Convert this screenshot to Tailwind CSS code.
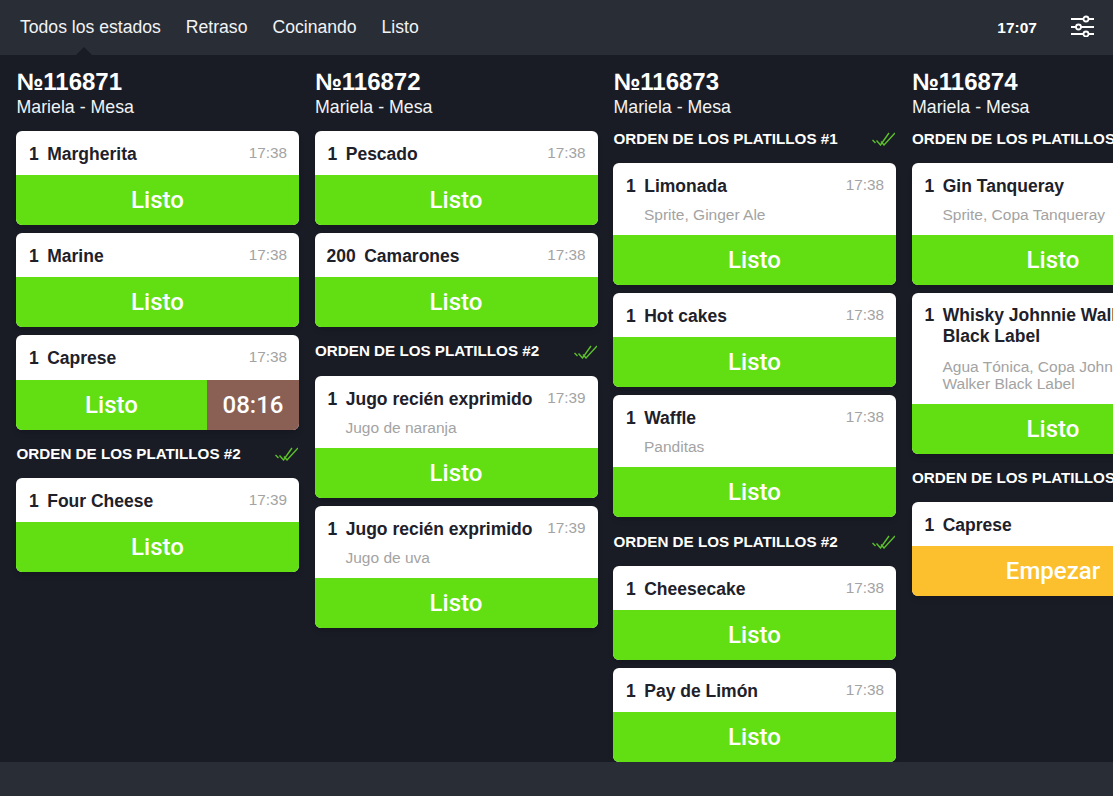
<!DOCTYPE html>
<html lang="es">
<head>
<meta charset="utf-8">
<script src="https://cdn.jsdelivr.net/npm/@tailwindcss/browser@4"></script>
<title>Órdenes</title>
</head>
<body class="bg-[#191c25] overflow-hidden font-['Liberation_Sans',Arial,sans-serif]">
<div class="w-[1113px] h-[796px] flex flex-col overflow-hidden">
  <header class="relative h-[55px] shrink-0 bg-[#292d36] flex items-center pl-[20px] pr-[19px] text-white">
    <nav class="flex gap-[25px] text-[17.6px] text-[#f2f3f4]">
      <span>Todos los estados</span><span>Retraso</span><span>Cocinando</span><span>Listo</span>
    </nav>
    <div class="ml-auto flex items-center gap-[34px]">
      <span class="text-[15.5px] font-bold">17:07</span>
      <svg class="w-[23px] h-[22px] mb-[4px]" viewBox="0 0 23 22" fill="none" stroke="white" stroke-width="1.8"><path d="M0 4h12.5M17.5 4H23M0 12h5M10 12h13M0 19h12.5M17.5 19H23"/><circle cx="15" cy="4" r="2.5"/><circle cx="7.5" cy="12" r="2.5"/><circle cx="15" cy="19" r="2.5"/></svg>
    </div>
    <div class="absolute left-[76px] bottom-0 w-0 h-0 border-x-[8px] border-x-transparent border-b-[8px] border-b-[#191c25]"></div>
  </header>

  <main class="flex-1 min-h-0 flex gap-[15.5px] pl-[16px] overflow-hidden">

    <!-- 116871 -->
    <section class="w-[283px] shrink-0 text-white">
      <div class="h-[59px] pt-[13px] pl-[0.5px]"><h2 class="text-[24px] leading-[28px] font-bold">№116871</h2><p class="text-[17.75px] leading-[23px] text-[#f2f3f4]">Mariela - Mesa</p></div>
      <div class="pt-[17px] flex flex-col gap-2">
        <article class="rounded-[6px] overflow-hidden bg-white shadow-md"><div class="flex justify-between pt-[13px] pl-[13px] pr-[12px] h-[44px]"><div class="flex gap-[8.5px] text-[17.5px] leading-[21px] font-bold text-[#1e212a]"><span>1</span><span>Margherita</span></div><span class="text-[15.3px] leading-[18px] text-[#a3a3a3]">17:38</span></div><div class="h-[50px] bg-[#62df13] flex items-center justify-center text-[24px] font-medium font-['Roboto',sans-serif]">Listo</div></article>
        <article class="rounded-[6px] overflow-hidden bg-white shadow-md"><div class="flex justify-between pt-[13px] pl-[13px] pr-[12px] h-[44px]"><div class="flex gap-[8.5px] text-[17.5px] leading-[21px] font-bold text-[#1e212a]"><span>1</span><span>Marine</span></div><span class="text-[15.3px] leading-[18px] text-[#a3a3a3]">17:38</span></div><div class="h-[50px] bg-[#62df13] flex items-center justify-center text-[24px] font-medium font-['Roboto',sans-serif]">Listo</div></article>
        <article class="rounded-[6px] overflow-hidden bg-white shadow-md"><div class="flex justify-between pt-[13px] pl-[13px] pr-[12px] h-[45px]"><div class="flex gap-[8.5px] text-[17.5px] leading-[21px] font-bold text-[#1e212a]"><span>1</span><span>Caprese</span></div><span class="text-[15.3px] leading-[18px] text-[#a3a3a3]">17:38</span></div><div class="h-[50px] flex text-[24px] font-medium font-['Roboto',sans-serif]"><div class="flex-1 bg-[#62df13] flex items-center justify-center">Listo</div><div class="w-[92px] bg-[#8a6054] flex items-center justify-center">08:16</div></div></article>
      </div>
      <div class="h-[48px] flex items-center justify-between pl-[0.5px] pr-[1px]"><h3 class="text-[15.2px] font-bold">ORDEN DE LOS PLATILLOS #2</h3><svg class="w-[23px] h-[14px]" viewBox="0 0 23 14" fill="none" stroke="#5cc02a" stroke-width="1.4"><path d="M0.5 8l3 3M4.5 8.5l4 4.5L17 1M9 9.5l3 3.5L23 1"/></svg></div>
      <div class="flex flex-col gap-2">
        <article class="rounded-[6px] overflow-hidden bg-white shadow-md"><div class="flex justify-between pt-[13px] pl-[13px] pr-[12px] h-[44px]"><div class="flex gap-[8.5px] text-[17.5px] leading-[21px] font-bold text-[#1e212a]"><span>1</span><span>Four Cheese</span></div><span class="text-[15.3px] leading-[18px] text-[#a3a3a3]">17:39</span></div><div class="h-[50px] bg-[#62df13] flex items-center justify-center text-[24px] font-medium font-['Roboto',sans-serif]">Listo</div></article>
      </div>
    </section>

    <!-- 116872 -->
    <section class="w-[283px] shrink-0 text-white">
      <div class="h-[59px] pt-[13px] pl-[0.5px]"><h2 class="text-[24px] leading-[28px] font-bold">№116872</h2><p class="text-[17.75px] leading-[23px] text-[#f2f3f4]">Mariela - Mesa</p></div>
      <div class="pt-[17px] flex flex-col gap-2">
        <article class="rounded-[6px] overflow-hidden bg-white shadow-md"><div class="flex justify-between pt-[13px] pl-[13px] pr-[12px] h-[44px]"><div class="flex gap-[8.5px] text-[17.5px] leading-[21px] font-bold text-[#1e212a]"><span>1</span><span>Pescado</span></div><span class="text-[15.3px] leading-[18px] text-[#a3a3a3]">17:38</span></div><div class="h-[50px] bg-[#62df13] flex items-center justify-center text-[24px] font-medium font-['Roboto',sans-serif]">Listo</div></article>
        <article class="rounded-[6px] overflow-hidden bg-white shadow-md"><div class="flex justify-between pt-[13px] pl-[12px] pr-[12px] h-[44px]"><div class="flex gap-[8.5px] text-[17.5px] leading-[21px] font-bold text-[#1e212a]"><span>200</span><span>Camarones</span></div><span class="text-[15.3px] leading-[18px] text-[#a3a3a3]">17:38</span></div><div class="h-[50px] bg-[#62df13] flex items-center justify-center text-[24px] font-medium font-['Roboto',sans-serif]">Listo</div></article>
      </div>
      <div class="h-[49px] flex items-center justify-between pl-[0.5px] pr-[1px]"><h3 class="text-[15.2px] font-bold">ORDEN DE LOS PLATILLOS #2</h3><svg class="w-[23px] h-[14px]" viewBox="0 0 23 14" fill="none" stroke="#5cc02a" stroke-width="1.4"><path d="M0.5 8l3 3M4.5 8.5l4 4.5L17 1M9 9.5l3 3.5L23 1"/></svg></div>
      <div class="flex flex-col gap-2">
        <article class="rounded-[6px] overflow-hidden bg-white shadow-md"><div class="flex justify-between pt-[13px] pl-[13px] pr-[12px] h-[72px]"><div><div class="flex gap-[8.5px] text-[17.5px] leading-[21px] font-bold text-[#1e212a]"><span>1</span><span>Jugo recién exprimido</span></div><p class="mt-[9px] ml-[18px] text-[15.5px] leading-[17px] text-[#a3a3a3]">Jugo de naranja</p></div><span class="text-[15.3px] leading-[18px] text-[#a3a3a3]">17:39</span></div><div class="h-[50px] bg-[#62df13] flex items-center justify-center text-[24px] font-medium font-['Roboto',sans-serif]">Listo</div></article>
        <article class="rounded-[6px] overflow-hidden bg-white shadow-md"><div class="flex justify-between pt-[13px] pl-[13px] pr-[12px] h-[72px]"><div><div class="flex gap-[8.5px] text-[17.5px] leading-[21px] font-bold text-[#1e212a]"><span>1</span><span>Jugo recién exprimido</span></div><p class="mt-[9px] ml-[18px] text-[15.5px] leading-[17px] text-[#a3a3a3]">Jugo de uva</p></div><span class="text-[15.3px] leading-[18px] text-[#a3a3a3]">17:39</span></div><div class="h-[50px] bg-[#62df13] flex items-center justify-center text-[24px] font-medium font-['Roboto',sans-serif]">Listo</div></article>
      </div>
    </section>

    <!-- 116873 -->
    <section class="w-[283px] shrink-0 text-white">
      <div class="h-[59px] pt-[13px] pl-[0.5px]"><h2 class="text-[24px] leading-[28px] font-bold">№116873</h2><p class="text-[17.75px] leading-[23px] text-[#f2f3f4]">Mariela - Mesa</p></div>
      <div class="h-[49px] flex items-center justify-between pl-[0.5px] pr-[1px]"><h3 class="mt-[1px] text-[15.2px] font-bold">ORDEN DE LOS PLATILLOS #1</h3><svg class="w-[23px] h-[14px]" viewBox="0 0 23 14" fill="none" stroke="#5cc02a" stroke-width="1.4"><path d="M0.5 8l3 3M4.5 8.5l4 4.5L17 1M9 9.5l3 3.5L23 1"/></svg></div>
      <div class="flex flex-col gap-2">
        <article class="rounded-[6px] overflow-hidden bg-white shadow-md"><div class="flex justify-between pt-[13px] pl-[13px] pr-[12px] h-[72px]"><div><div class="flex gap-[8.5px] text-[17.5px] leading-[21px] font-bold text-[#1e212a]"><span>1</span><span>Limonada</span></div><p class="mt-[9px] ml-[18px] text-[15.5px] leading-[17px] text-[#a3a3a3]">Sprite, Ginger Ale</p></div><span class="text-[15.3px] leading-[18px] text-[#a3a3a3]">17:38</span></div><div class="h-[50px] bg-[#62df13] flex items-center justify-center text-[24px] font-medium font-['Roboto',sans-serif]">Listo</div></article>
        <article class="rounded-[6px] overflow-hidden bg-white shadow-md"><div class="flex justify-between pt-[13px] pl-[13px] pr-[12px] h-[44px]"><div class="flex gap-[8.5px] text-[17.5px] leading-[21px] font-bold text-[#1e212a]"><span>1</span><span>Hot cakes</span></div><span class="text-[15.3px] leading-[18px] text-[#a3a3a3]">17:38</span></div><div class="h-[50px] bg-[#62df13] flex items-center justify-center text-[24px] font-medium font-['Roboto',sans-serif]">Listo</div></article>
        <article class="rounded-[6px] overflow-hidden bg-white shadow-md"><div class="flex justify-between pt-[13px] pl-[13px] pr-[12px] h-[72px]"><div><div class="flex gap-[8.5px] text-[17.5px] leading-[21px] font-bold text-[#1e212a]"><span>1</span><span>Waffle</span></div><p class="mt-[9px] ml-[18px] text-[15.5px] leading-[17px] text-[#a3a3a3]">Panditas</p></div><span class="text-[15.3px] leading-[18px] text-[#a3a3a3]">17:38</span></div><div class="h-[50px] bg-[#62df13] flex items-center justify-center text-[24px] font-medium font-['Roboto',sans-serif]">Listo</div></article>
      </div>
      <div class="h-[49px] flex items-center justify-between pl-[0.5px] pr-[1px]"><h3 class="mt-[1px] text-[15.2px] font-bold">ORDEN DE LOS PLATILLOS #2</h3><svg class="w-[23px] h-[14px]" viewBox="0 0 23 14" fill="none" stroke="#5cc02a" stroke-width="1.4"><path d="M0.5 8l3 3M4.5 8.5l4 4.5L17 1M9 9.5l3 3.5L23 1"/></svg></div>
      <div class="flex flex-col gap-2">
        <article class="rounded-[6px] overflow-hidden bg-white shadow-md"><div class="flex justify-between pt-[13px] pl-[13px] pr-[12px] h-[44px]"><div class="flex gap-[8.5px] text-[17.5px] leading-[21px] font-bold text-[#1e212a]"><span>1</span><span>Cheesecake</span></div><span class="text-[15.3px] leading-[18px] text-[#a3a3a3]">17:38</span></div><div class="h-[50px] bg-[#62df13] flex items-center justify-center text-[24px] font-medium font-['Roboto',sans-serif]">Listo</div></article>
        <article class="rounded-[6px] overflow-hidden bg-white shadow-md"><div class="flex justify-between pt-[13px] pl-[13px] pr-[12px] h-[44px]"><div class="flex gap-[8.5px] text-[17.5px] leading-[21px] font-bold text-[#1e212a]"><span>1</span><span>Pay de Limón</span></div><span class="text-[15.3px] leading-[18px] text-[#a3a3a3]">17:38</span></div><div class="h-[50px] bg-[#62df13] flex items-center justify-center text-[24px] font-medium font-['Roboto',sans-serif]">Listo</div></article>
      </div>
    </section>

    <!-- 116874 -->
    <section class="w-[283px] shrink-0 text-white">
      <div class="h-[59px] pt-[13px] pl-[0.5px]"><h2 class="text-[24px] leading-[28px] font-bold">№116874</h2><p class="text-[17.75px] leading-[23px] text-[#f2f3f4]">Mariela - Mesa</p></div>
      <div class="h-[49px] flex items-center justify-between pl-[0.5px] pr-[1px]"><h3 class="mt-[1px] text-[15.2px] font-bold whitespace-nowrap">ORDEN DE LOS PLATILLOS #1</h3></div>
      <div class="flex flex-col gap-2">
        <article class="rounded-[6px] overflow-hidden bg-white shadow-md"><div class="flex justify-between pt-[13px] pl-[13px] pr-[12px] h-[72px]"><div><div class="flex gap-[8.5px] text-[17.5px] leading-[21px] font-bold text-[#1e212a]"><span>1</span><span>Gin Tanqueray</span></div><p class="mt-[9px] ml-[18px] text-[15.5px] leading-[17px] text-[#a3a3a3]">Sprite, Copa Tanqueray</p></div><span class="text-[15.3px] leading-[18px] text-[#a3a3a3]">17:38</span></div><div class="h-[50px] bg-[#62df13] flex items-center justify-center text-[24px] font-medium font-['Roboto',sans-serif]">Listo</div></article>
        <article class="rounded-[6px] overflow-hidden bg-white shadow-md"><div class="flex justify-between pt-3 pl-[13px] pr-[12px] h-[111px]"><div class="w-[222px] shrink-0"><div class="flex gap-[8.5px] text-[17.5px] leading-[21px] font-bold text-[#1e212a]"><span>1</span><span>Whisky Johnnie Walker Black Label</span></div><p class="mt-[11px] ml-[18px] text-[15.5px] leading-[17px] text-[#a3a3a3]">Agua Tónica, Copa Johnnie Walker Black Label</p></div><span class="text-[15.3px] leading-[18px] text-[#a3a3a3]">17:38</span></div><div class="h-[50px] bg-[#62df13] flex items-center justify-center text-[24px] font-medium font-['Roboto',sans-serif]">Listo</div></article>
      </div>
      <div class="h-[48px] flex items-center justify-between pl-[0.5px] pr-[1px]"><h3 class="text-[15.2px] font-bold whitespace-nowrap">ORDEN DE LOS PLATILLOS #2</h3></div>
      <div class="flex flex-col gap-2">
        <article class="rounded-[6px] overflow-hidden bg-white shadow-md"><div class="flex justify-between pt-[13px] pl-[13px] pr-[12px] h-[44px]"><div class="flex gap-[8.5px] text-[17.5px] leading-[21px] font-bold text-[#1e212a]"><span>1</span><span>Caprese</span></div><span class="text-[15.3px] leading-[18px] text-[#a3a3a3]">17:39</span></div><div class="h-[50px] bg-[#fcbf2d] flex items-center justify-center text-[24px] font-medium font-['Roboto',sans-serif]">Empezar</div></article>
      </div>
    </section>
  </main>

  <footer class="h-[34px] shrink-0 bg-[#292d36]"></footer>
</div>
</body>
</html>
